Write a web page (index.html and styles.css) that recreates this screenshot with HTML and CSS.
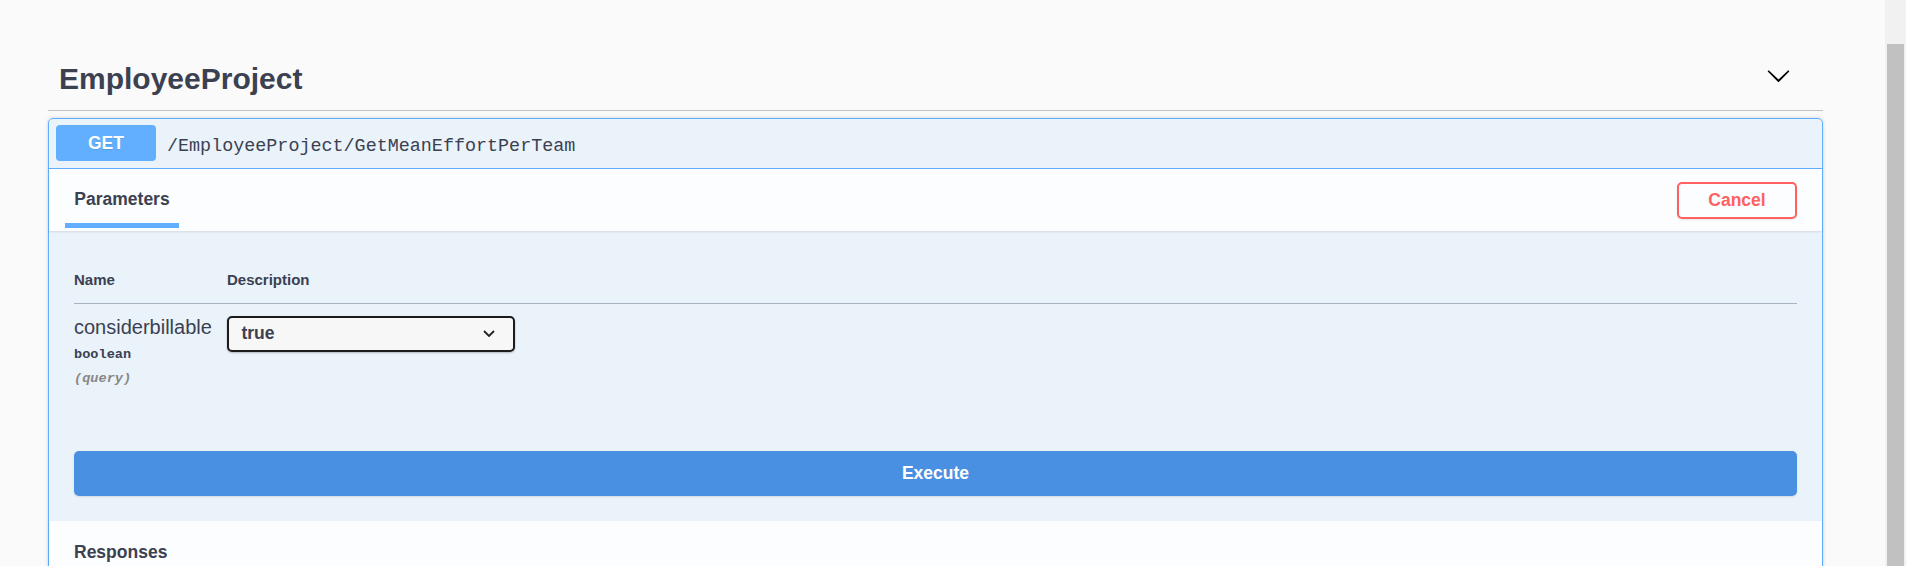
FILE: index.html
```html
<!DOCTYPE html>
<html lang="en">
<head>
<meta charset="utf-8">
<title>EmployeeProject</title>
<link rel="stylesheet" href="styles.css">
</head>
<body>
<div class="viewport">
  <main class="page">
    <section class="tag-section">
      <div class="tag">
        <h3 class="tag-title">EmployeeProject</h3>
        <svg class="tag-arrow" viewBox="0 0 20 20" aria-hidden="true"><path d="M17.418 6.109c.272-.268.709-.268.979 0s.271.701 0 .969l-7.908 7.83c-.27.268-.707.268-.979 0l-7.908-7.83c-.27-.268-.27-.701 0-.969.271-.268.709-.268.979 0L10 13.25l7.418-7.141z"/></svg>
      </div>
      <div class="opblock">
        <div class="summary">
          <span class="method">GET</span>
          <span class="path">/EmployeeProject/GetMeanEffortPerTeam</span>
        </div>
        <div class="section-header">
          <div class="tab">
            <h4 class="tab-title">Parameters</h4>
            <span class="tab-line"></span>
          </div>
          <button class="btn-cancel" type="button">Cancel</button>
        </div>
        <div class="params">
          <table class="params-table">
            <thead>
              <tr>
                <th class="col-name">Name</th>
                <th>Description</th>
              </tr>
            </thead>
            <tbody>
              <tr>
                <td>
                  <div class="param-name">considerbillable</div>
                  <div class="param-type">boolean</div>
                  <div class="param-in">(query)</div>
                </td>
                <td>
                  <div class="select">
                    <span>true</span>
                    <svg class="select-arrow" viewBox="0 0 12 7" aria-hidden="true"><path d="M1 1 L6 6 L11 1"/></svg>
                  </div>
                </td>
              </tr>
            </tbody>
          </table>
        </div>
        <div class="execute-wrapper">
          <button class="btn-execute" type="button">Execute</button>
        </div>
        <div class="section-header responses">
          <h4 class="tab-title">Responses</h4>
        </div>
      </div>
    </section>
  </main>
  <div class="scrollbar"><div class="thumb"></div></div>
</div>
</body>
</html>
```

FILE: styles.css
```css
* {
  box-sizing: border-box;
}

html,
body {
  margin: 0;
  padding: 0;
  height: 100%;
}

body {
  background: #fafafa;
  font-family: "Liberation Sans", Arial, sans-serif;
  color: #3b4151;
  overflow: hidden;
}

.viewport {
  display: flex;
  height: 566px;
}

.page {
  flex: 1;
  min-width: 0;
  padding: 49px 0 0 48px;
  overflow: hidden;
}

.tag-section {
  width: 1775px;
}

.tag {
  display: flex;
  align-items: flex-start;
  padding: 12.5px 32px 14.5px 11px;
  border-bottom: 1px solid rgba(59, 65, 81, 0.3);
}

.tag-title {
  margin: 0;
  font-size: 30px;
  line-height: 34px;
  font-weight: 700;
}

.tag-arrow {
  margin-left: auto;
  margin-top: 1.8px;
  width: 25px;
  height: 25px;
  fill: #000;
}

.opblock {
  margin-top: 7px;
  border: 1px solid #61affe;
  border-radius: 5px;
  background: rgba(97, 175, 254, 0.1);
  box-shadow: 0 0 3.75px rgba(0, 0, 0, 0.19);
}

.summary {
  display: flex;
  align-items: center;
  padding: 6px 7px 7px;
  border-bottom: 1px solid #61affe;
}

.method {
  width: 100px;
  height: 36px;
  display: flex;
  align-items: center;
  justify-content: center;
  background: #61affe;
  border-radius: 4px;
  color: #fff;
  font-size: 17.5px;
  font-weight: 700;
  text-shadow: 0 1px 0 rgba(0, 0, 0, 0.1);
}

.path {
  margin-left: 11px;
  padding-top: 7.6px;
  font-family: "Liberation Mono", "DejaVu Sans Mono", monospace;
  font-size: 18.4px;
  color: #3b4151;
}

.section-header {
  display: flex;
  align-items: center;
  height: 62px;
  padding: 0 25px 0 16px;
  background: rgba(255, 255, 255, 0.8);
  box-shadow: 0 1px 2px rgba(0, 0, 0, 0.1);
}

.tab {
  align-self: flex-start;
  margin-top: 19.5px;
  width: 114px;
  display: flex;
  flex-direction: column;
  align-items: center;
}

.tab-title {
  margin: 0;
  font-size: 17.5px;
  line-height: 20px;
  font-weight: 700;
  color: #3b4151;
}

.tab-line {
  width: 114px;
  height: 5px;
  margin-top: 14.5px;
  background: #61affe;
}

.btn-cancel {
  margin-left: auto;
  width: 120px;
  height: 37px;
  padding: 0;
  border: 2px solid #ff6060;
  border-radius: 5px;
  background: transparent;
  color: #ff6060;
  font-family: "Liberation Sans", Arial, sans-serif;
  font-size: 17.5px;
  font-weight: 700;
  box-shadow: 0 1px 2px rgba(0, 0, 0, 0.1);
}

.params {
  padding: 25px 25px 26px;
}

.params-table {
  width: 100%;
  border-collapse: separate;
  border-spacing: 0;
}

.params-table th {
  text-align: left;
  padding: 15px 0;
  font-size: 15px;
  line-height: 17px;
  font-weight: 700;
  border-bottom: 1px solid #a9b2c0;
}

.params-table th.col-name {
  width: 153px;
}

.params-table td {
  padding: 12px 0 12.5px;
  vertical-align: top;
}

.param-name {
  font-size: 20px;
  line-height: 22px;
}

.param-type {
  margin-top: 9px;
  font-family: "Liberation Mono", "DejaVu Sans Mono", monospace;
  font-size: 13.6px;
  line-height: 16px;
  font-weight: 700;
}

.param-in {
  margin-top: 8px;
  font-family: "Liberation Mono", "DejaVu Sans Mono", monospace;
  font-size: 13.6px;
  line-height: 16px;
  font-style: italic;
  font-weight: 700;
  color: #888;
}

.select {
  display: flex;
  align-items: center;
  justify-content: space-between;
  width: 288px;
  height: 35.5px;
  padding: 0 18.4px 0 12.4px;
  border: 2px solid #1b1b1b;
  border-radius: 5px;
  background: #f7f7f7;
  box-shadow: 0 1px 2px rgba(0, 0, 0, 0.25);
  font-size: 17.5px;
  font-weight: 700;
}

.select-arrow {
  width: 12px;
  height: 7px;
  fill: none;
  stroke: #222;
  stroke-width: 1.8;
}

.execute-wrapper {
  padding: 25px;
}

.btn-execute {
  display: block;
  width: 100%;
  height: 45px;
  border: 0;
  border-radius: 5px;
  background: #4990e2;
  color: #fff;
  font-family: "Liberation Sans", Arial, sans-serif;
  font-size: 17.5px;
  font-weight: 700;
  box-shadow: 0 1px 2px rgba(0, 0, 0, 0.1);
}

.responses {
  height: 62.5px;
  padding-left: 25px;
}

.scrollbar {
  width: 21px;
  display: flex;
  flex-direction: column;
  padding: 44px 2px 0;
  background: #f1f1f1;
}

.thumb {
  flex: 1;
  background: #c1c1c1;
}
```
